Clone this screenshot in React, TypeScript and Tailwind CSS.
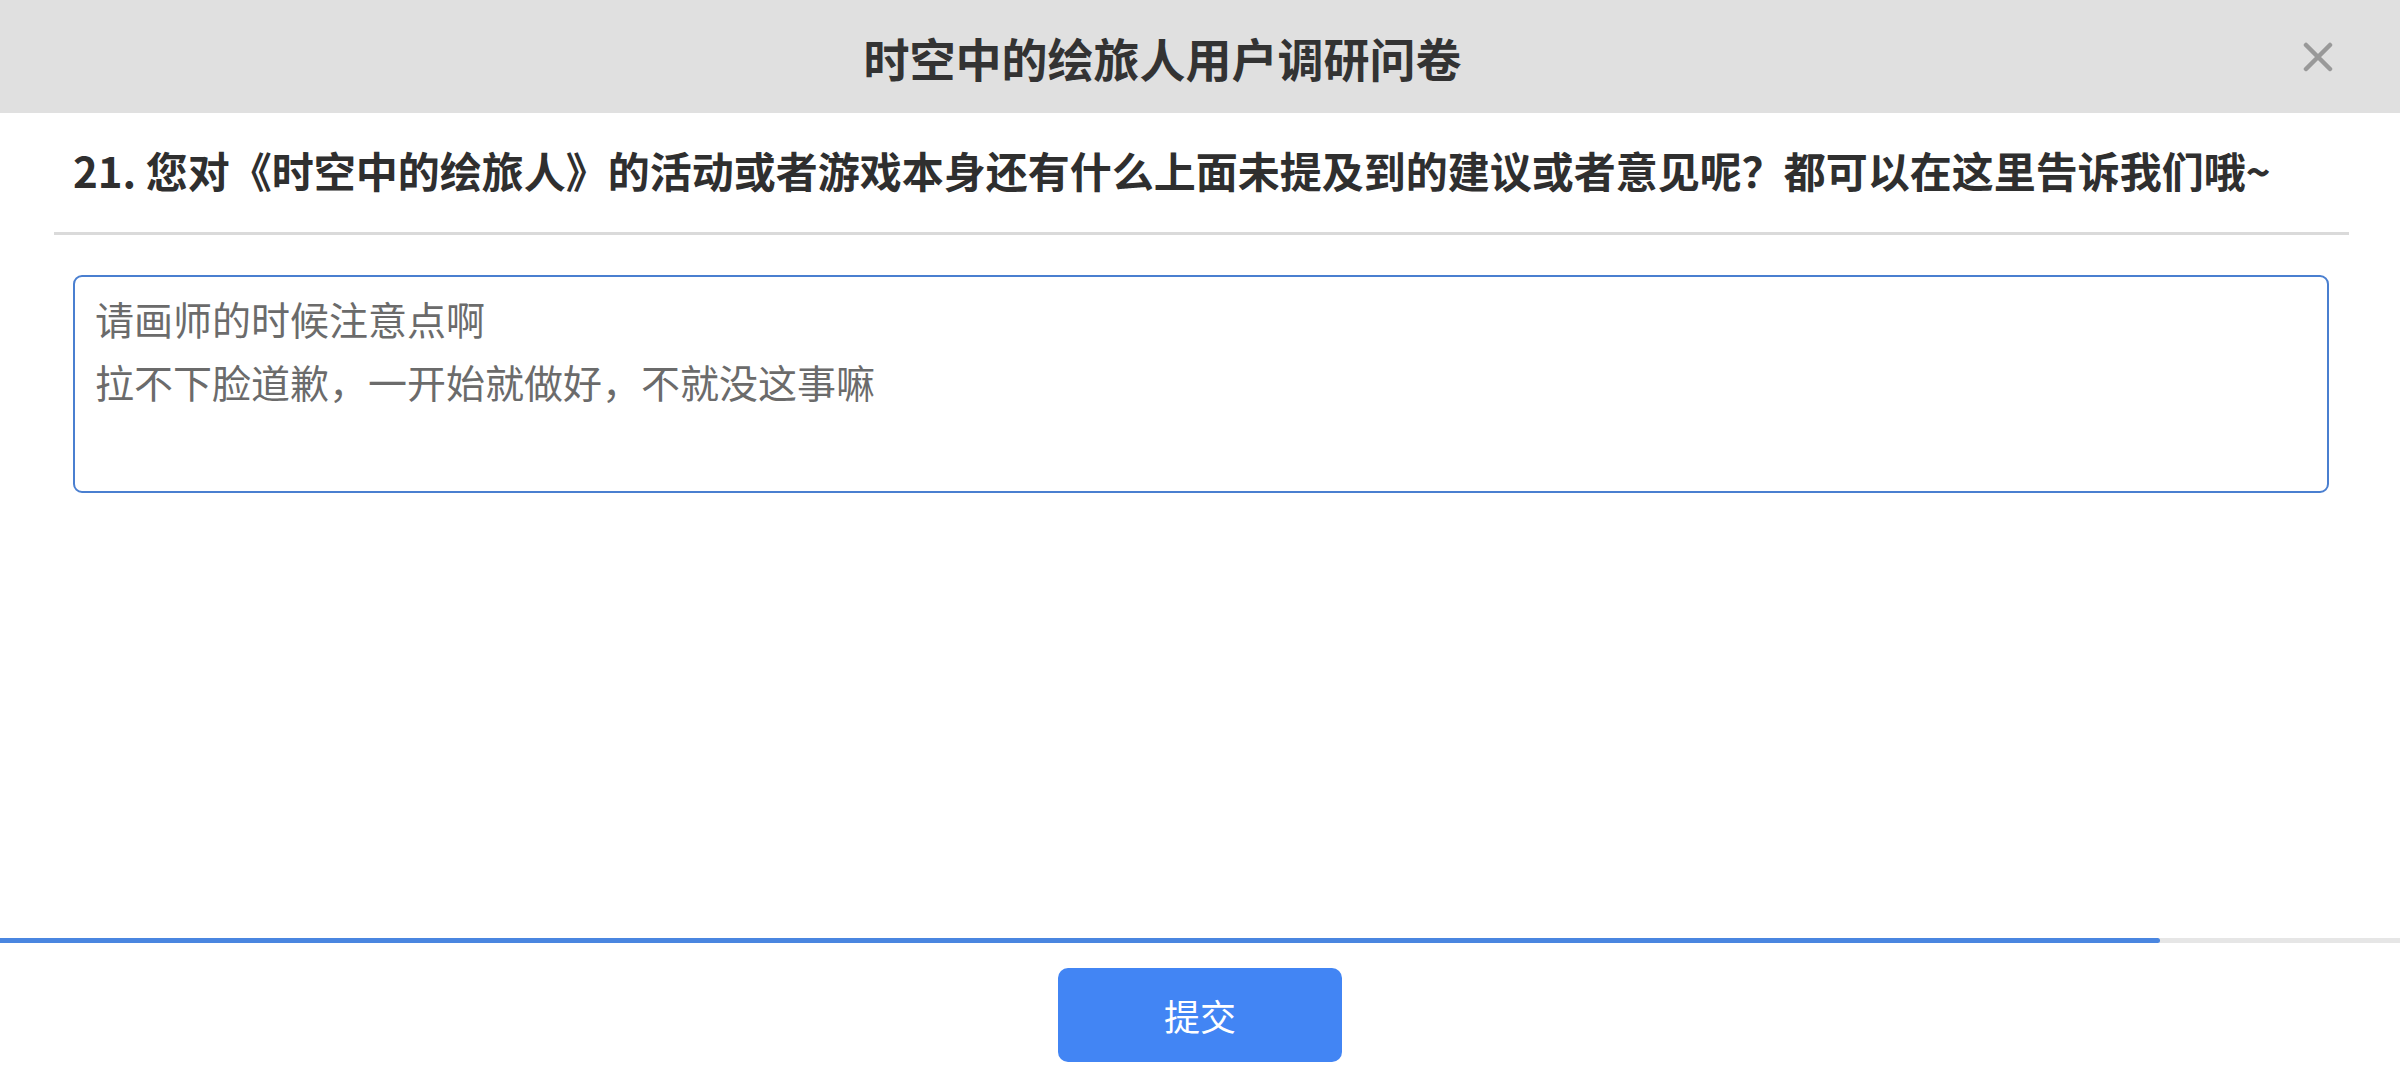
export default function App() {
  const progress = 90
  const answer = ['请画师的时候注意点啊', '拉不下脸道歉，一开始就做好，不就没这事嘛']

  return (
    <div
      className="flex h-[1080px] w-full flex-col bg-white"
      style={{ fontFamily: '"Noto Sans CJK SC", "Noto Sans", sans-serif' }}
    >
      {/* header */}
      <div className="flex h-[113px] shrink-0 items-center bg-[#e0e0e0] pl-[22px]">
        <div className="flex-1 text-center text-[46px] font-bold leading-none text-[#333]">
          时空中的绘旅人用户调研问卷
        </div>
        <button className="mr-[67px] flex h-[30px] w-[30px] items-center justify-center text-[#999]">
          <svg viewBox="0 0 30 30" className="h-[30px] w-[30px]" fill="none" stroke="currentColor" strokeWidth="4.5" strokeLinecap="round">
            <path d="M3 3L27 27M27 3L3 27" />
          </svg>
        </button>
      </div>

      {/* question */}
      <div className="pl-[73px] pr-[60px] pt-[28px] text-[42px] font-bold leading-[58px] text-[#2f2f2f]">
        21. 您对《时空中的绘旅人》的活动或者游戏本身还有什么上面未提及到的建议或者意见呢？都可以在这里告诉我们哦~
      </div>
      <div className="ml-[54px] mr-[51px] mt-[33px] h-[3px] bg-[#dadada]" />

      {/* answer box */}
      <div className="ml-[73px] mr-[71px] mt-[40px] h-[218px] rounded-[9px] border-2 border-[#4a7fd0] px-[20px] pt-[10px]">
        {answer.map((line, i) => (
          <div key={i} className="text-[39px] leading-[63px] text-[#6b6b6b]">
            {line}
          </div>
        ))}
      </div>

      <div className="flex-1" />

      {/* progress */}
      <div className="h-[5px] w-full bg-[#e6e6e6]">
        <div className="h-full rounded-r-full bg-[#4a86e0]" style={{ width: `${progress}%` }} />
      </div>

      {/* footer */}
      <div className="flex justify-center pb-[18px] pt-[25px]">
        <button className="flex h-[94px] w-[284px] items-center justify-center rounded-[10px] bg-[#4285f4] text-[36px] text-white">
          提交
        </button>
      </div>
    </div>
  )
}
